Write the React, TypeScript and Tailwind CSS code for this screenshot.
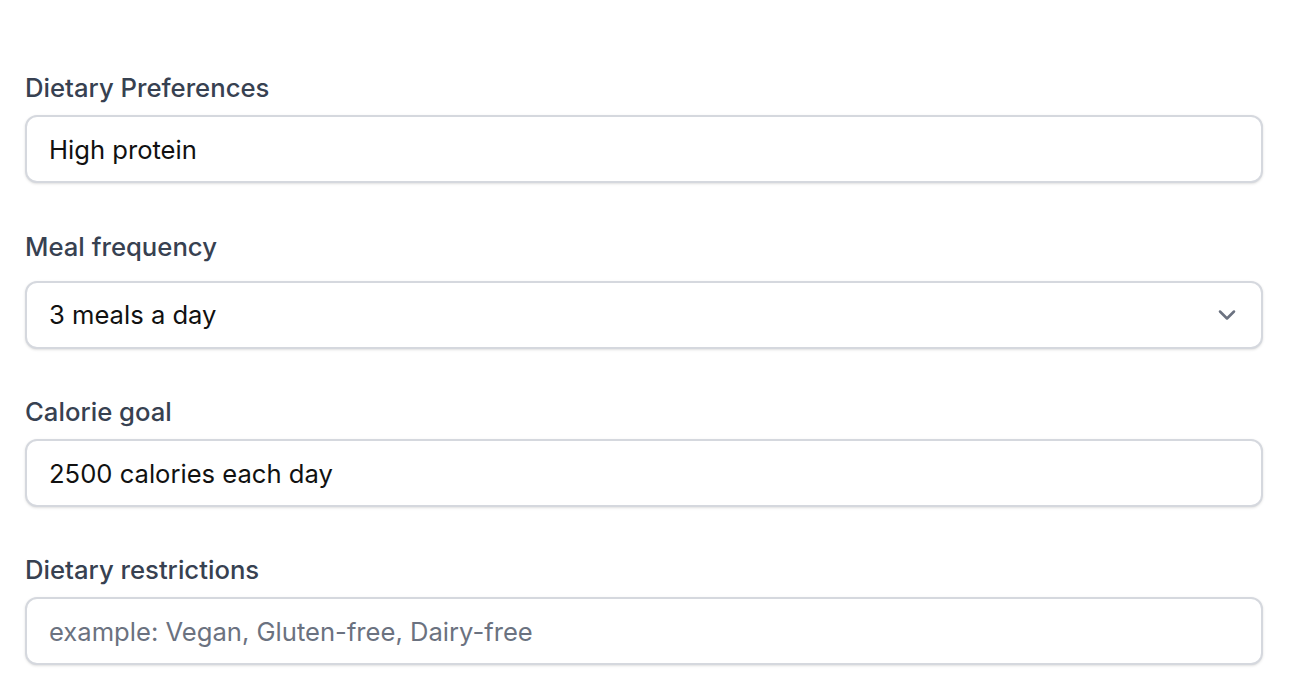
import { ChevronDown } from "lucide-react";

function Label({ children, className = "" }: { children: React.ReactNode; className?: string }) {
  return (
    <label className={`block text-[25.7px] leading-[36px] font-medium text-[#374151] ${className}`}>
      {children}
    </label>
  );
}

const inputCls =
  "block w-full h-[68px] rounded-[12px] border-2 border-[#d5d8de] bg-white px-[22px] text-[25.6px] text-[#111111] shadow-sm outline-none placeholder:text-[#6b7280]";

export default function App() {
  return (
    <div
      className="min-h-screen bg-white px-[25px] pt-[70px] pr-[29px]"
      style={{ fontFamily: "Inter, 'Noto Sans', sans-serif" }}
    >
      {/* Dietary Preferences */}
      <Label className="mb-[9px]">Dietary Preferences</Label>
      <input className={inputCls} defaultValue="High protein" />

      {/* Meal frequency */}
      <Label className="mt-[46px] mb-[16px]">Meal frequency</Label>
      <div className="relative">
        <select className={`${inputCls} appearance-none pr-[60px]`} defaultValue="3">
          <option value="1">1 meal a day</option>
          <option value="2">2 meals a day</option>
          <option value="3">3 meals a day</option>
          <option value="4">4 meals a day</option>
        </select>
        <ChevronDown
          className="pointer-events-none absolute right-[22px] top-1/2 -translate-y-1/2 w-[28px] h-[28px] text-[#6b7280]"
          strokeWidth={2.2}
        />
      </div>

      {/* Calorie goal */}
      <Label className="mt-[45px] mb-[9px]">Calorie goal</Label>
      <input className={inputCls} defaultValue="2500 calories each day" />

      {/* Dietary restrictions */}
      <Label className="mt-[45px] mb-[9px]">Dietary restrictions</Label>
      <input className={inputCls} placeholder="example: Vegan, Gluten-free, Dairy-free" />
    </div>
  );
}
